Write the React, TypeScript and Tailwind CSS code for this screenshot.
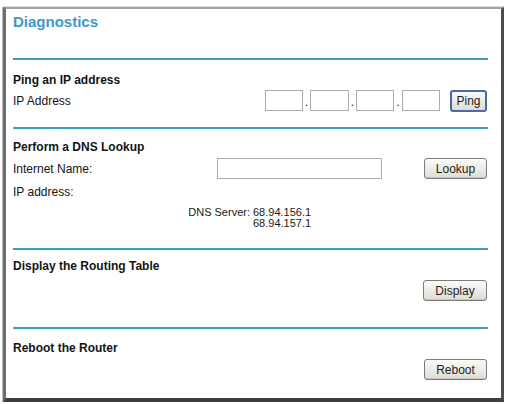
import React from "react";

const btn =
  "flex items-center justify-center rounded-[3px] border border-[#7b7b7b] bg-gradient-to-b from-[#fbfbf9] to-[#dedcd4] text-[12px] leading-none text-[#1e1e1e] shadow-[inset_0_-1px_0_#c9c7bd]";

function Line() {
  return <div className="h-[2px] bg-[#3a9ec2]" />;
}

function IpBox() {
  return <div className="h-[21px] w-[38px] border border-[#a6adb3] bg-white" />;
}

function Dot() {
  return (
    <div className="flex h-[21px] w-[7px] items-end justify-center pb-[3px] text-[12px] leading-none text-[#222]">
      .
    </div>
  );
}

export default function App() {
  return (
    <div
      className="h-[404px] w-[506px] bg-white pl-[3px] pt-[7px] text-[#141414]"
      style={{ fontFamily: '"Liberation Sans", Arial, sans-serif' }}
    >
      <div className="box-border h-[395px] w-[501px] border-b-[4px] border-l-[3px] border-r-[3px] border-t-2 border-b-[#3f3f3f] border-l-[#6e6e6e] border-r-[#4d4d4d] border-t-[#a3a3a3] bg-white shadow-[-1px_0_0_#bdbdbd,0_-1px_0_#dcdcdc]">
        <div className="flex flex-col pl-[7px] pr-[13px]">
          {/* Title */}
          <div className="h-[49px] pt-[4px]">
            <div className="text-[15px] font-bold leading-[17px] text-[#3b9acb]">Diagnostics</div>
          </div>
          <Line />

          {/* Ping */}
          <div className="flex h-[67px] flex-col pt-[13px]">
            <div className="h-[14px] text-[12px] font-bold leading-[14px]">Ping an IP address</div>
            <div className="mt-[3px] flex h-[21px] items-center">
              <div className="text-[12px] leading-[14px]">IP Address</div>
              <div className="ml-auto flex items-center pr-px">
                <IpBox />
                <Dot />
                <div className="h-[21px] w-[39px] border border-[#a6adb3] bg-white" />
                <Dot />
                <IpBox />
                <div className="flex h-[21px] w-[8px] items-end justify-center pb-[3px] text-[12px] leading-none text-[#222]">.</div>
                <IpBox />
                <button className="ml-[10px] flex h-[22px] w-[37px] items-center justify-center rounded-[3px] border-2 border-[#4a6aa6] bg-gradient-to-b from-[#fbfbf9] to-[#dedcd4] text-[12px] leading-none text-[#1e1e1e]">
                  Ping
                </button>
              </div>
            </div>
          </div>
          <Line />

          {/* DNS */}
          <div className="flex h-[119px] flex-col pt-[11px]">
            <div className="h-[14px] text-[12px] font-bold leading-[14px]">Perform a DNS Lookup</div>
            <div className="mt-[4px] flex h-[21px] items-center">
              <div className="w-[204px] text-[12px] leading-[14px]">Internet Name:</div>
              <div className="h-[21px] w-[165px] border border-[#a6adb3] bg-white" />
              <button className={`${btn} ml-auto mr-px h-[21px] w-[63px]`}>Lookup</button>
            </div>
            <div className="mt-[6px] h-[14px] text-[12px] leading-[14px]">IP address:</div>
            <div className="mt-[8px] flex text-[11px] leading-[11px] text-[#1a1a1a]">
              <div className="w-[240px] pr-[3px] text-right">DNS Server:</div>
              <div className="flex flex-col">
                <div>68.94.156.1</div>
                <div>68.94.157.1</div>
              </div>
            </div>
          </div>
          <Line />

          {/* Routing */}
          <div className="flex h-[77px] flex-col pt-[9px]">
            <div className="h-[14px] text-[12px] font-bold leading-[14px]">Display the Routing Table</div>
            <div className="mt-[7px] flex justify-end pr-px">
              <button className={`${btn} h-[21px] w-[64px]`}>Display</button>
            </div>
          </div>
          <Line />

          {/* Reboot */}
          <div className="flex h-[69px] flex-col pt-[12px]">
            <div className="h-[14px] text-[12px] font-bold leading-[14px]">Reboot the Router</div>
            <div className="mt-[4px] flex justify-end pr-px">
              <button className={`${btn} h-[21px] w-[63px]`}>Reboot</button>
            </div>
          </div>
        </div>
      </div>
    </div>
  );
}
